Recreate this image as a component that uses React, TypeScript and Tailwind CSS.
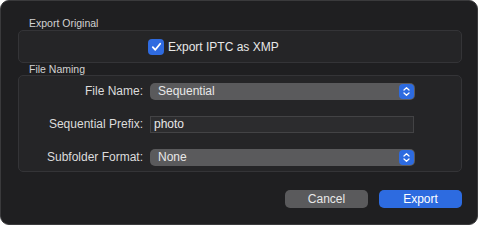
import type { ReactNode } from "react";

const font = { fontFamily: '"Liberation Sans", Arial, sans-serif' };

function Stepper() {
  return (
    <span className="flex h-[15px] w-[15px] items-center justify-center rounded-[4px] bg-[#2d6be0]">
      <svg width="9" height="11" viewBox="0 0 9 11" fill="none">
        <path d="M2 4 L4.5 1.8 L7 4" stroke="white" strokeWidth="1.3" strokeLinecap="round" strokeLinejoin="round" />
        <path d="M2 7 L4.5 9.2 L7 7" stroke="white" strokeWidth="1.3" strokeLinecap="round" strokeLinejoin="round" />
      </svg>
    </span>
  );
}

function Popup({ value }: { value: string }) {
  return (
    <div className="flex h-[17px] w-[265px] items-center justify-between rounded-[5px] bg-[#5a5a5c] pl-[8px] pr-[1px] text-[12px] text-[#e8e8e8]">
      <span>{value}</span>
      <Stepper />
    </div>
  );
}

function Row({ label, children }: { label: string; children: ReactNode }) {
  return (
    <div className="flex items-center">
      <span className="w-[131px] pr-[7px] text-right text-[12px] text-[#dcdcdc]">{label}</span>
      {children}
    </div>
  );
}

export default function App() {
  return (
    <div className="h-[226px] w-[480px] bg-white" style={font}>
      <div className="flex h-[225px] w-[478px] flex-col rounded-[9px] border border-[#3a3a3c] bg-[#1f1f21] pl-[17px] pr-[15px] pt-[15px]">
        <div className="pl-[11px] text-[10.5px] leading-[14px] text-[#d2d2d2]">Export Original</div>
        <div className="flex h-[33px] items-center rounded-[5px] border border-[#343437] bg-[#252527] pl-[129px]">
          <div className="flex items-center gap-[4px]">
            <span className="flex h-[16px] w-[16px] items-center justify-center rounded-[4px] bg-[#2f6be0]">
              <svg width="11" height="10" viewBox="0 0 11 10" fill="none">
                <path d="M1.8 5.2 L4.3 7.8 L9.2 1.8" stroke="white" strokeWidth="1.8" strokeLinecap="round" strokeLinejoin="round" />
              </svg>
            </span>
            <span className="text-[12px] text-[#e8e8e8]">Export IPTC as XMP</span>
          </div>
        </div>
        <div className="pl-[11px] text-[10.5px] leading-[12px] text-[#d2d2d2]">File Naming</div>
        <div className="flex h-[97px] flex-col gap-[15px] rounded-[5px] border border-[#343437] bg-[#252527] pt-[6px]">
          <Row label="File Name:">
            <Popup value="Sequential" />
          </Row>
          <Row label="Sequential Prefix:">
            <div className="flex h-[17px] w-[264px] items-center border border-[#434345] bg-[#2c2c2e] pl-[3px] text-[12px] text-[#e8e8e8]">
              photo
            </div>
          </Row>
          <Row label="Subfolder Format:">
            <Popup value="None" />
          </Row>
        </div>
        <div className="mt-[18px] flex justify-end gap-[11px]">
          <button className="h-[18px] w-[83px] rounded-[5px] bg-[#5a5a5c] text-[12px] leading-[18px] text-[#e8e8e8]">
            Cancel
          </button>
          <button className="h-[18px] w-[83px] rounded-[5px] bg-[#2d6be0] text-[12px] leading-[18px] text-white">
            Export
          </button>
        </div>
      </div>
    </div>
  );
}
